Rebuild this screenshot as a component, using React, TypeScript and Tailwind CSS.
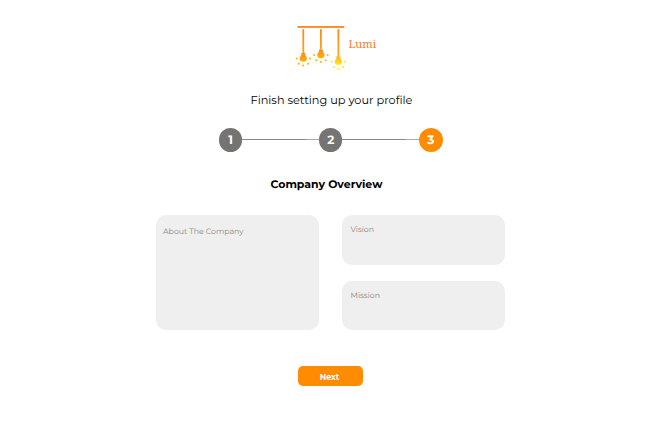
const lamps = [
  { x: 8.3, y: 36.5, from: '#ff8a1c', to: '#ffb000' },
  { x: 25.9, y: 33, from: '#ff8a1c', to: '#ffb400' },
  { x: 43.4, y: 39.8, from: '#ffb01c', to: '#ffea1c' },
];

const sparks = [[-6.7, 0], [6.7, 0], [-4.7, 5.2], [4.7, 5.2], [0, 6.9]];

function Logo() {
  return (
    <div className="ml-[295px] flex h-[50px] w-[84px] items-start">
      <svg width="52" height="50" viewBox="0 0 52 50" className="shrink-0">
        <defs>
          <linearGradient id="rod" gradientUnits="userSpaceOnUse" x1="0" y1="4" x2="0" y2="36">
            <stop offset="0" stopColor="#ff8416" />
            <stop offset="1" stopColor="#ffa81c" />
          </linearGradient>
          {lamps.map((l, i) => (
            <linearGradient key={i} id={`bulb${i}`} x1="0" y1="0" x2="0" y2="1">
              <stop offset="0" stopColor={l.from} />
              <stop offset="1" stopColor={l.to} />
            </linearGradient>
          ))}
        </defs>
        <rect x="2.5" y="4" width="46.7" height="1.9" fill="#ff8a22" />
        {lamps.map((l, i) => (
          <g key={i}>
            <rect x={l.x - 0.9} y="7.2" width="1.8" height={l.y - 12.5} fill="url(#rod)" />
            <path
              transform={`translate(${l.x} ${l.y})`}
              d="M-2-5.6H2V-3.2C2.2-2.4 3.6-1.8 3.6 0A3.6 3.3 0 0 1-3.6 0C-3.6-1.8-2.2-2.4-2-3.2Z"
              fill={`url(#bulb${i})`}
            />
            {sparks.map(([dx, dy], j) => (
              <circle key={j} cx={l.x + dx} cy={l.y + dy} r="1" fill={l.to} />
            ))}
          </g>
        ))}
      </svg>
      <span className="ml-[1.5px] mt-[15px] font-['Noto_Serif','DejaVu_Serif',serif] text-[11px] leading-4 text-[#ff7a1f]">
        Lumi
      </span>
    </div>
  );
}

function Step({ n, active = false }: { n: number; active?: boolean }) {
  return (
    <div
      className={`flex size-[23.4px] shrink-0 items-center justify-center rounded-full pt-0.5 text-[12px] font-bold text-white ${
        active ? 'bg-[#ff8c00]' : 'bg-[#757472]'
      }`}
    >
      {n}
    </div>
  );
}

function Line() {
  return (
    <div className="flex flex-1">
      <div className="h-px flex-1 bg-[#8a8a8a]" />
      <div className="h-px w-[13px] bg-[#a8a8a8]" />
    </div>
  );
}

export default function App() {
  return (
    <main className="h-[431px] w-[669px] overflow-hidden bg-white pt-[22px] font-['Montserrat','Inter',sans-serif] text-black [text-rendering:geometricPrecision]">
      <Logo />
      <h1 className="ml-[250.5px] mt-[19px] h-[18px] whitespace-nowrap text-[11.3px] leading-[18px]">
        Finish setting up your profile
      </h1>
      <div className="ml-[218.8px] mt-[19.2px] flex w-[223.8px] items-center">
        <Step n={1} />
        <Line />
        <Step n={2} />
        <Line />
        <Step n={3} active />
      </div>
      <h2 className="ml-[270.5px] mt-[23.4px] h-[18px] whitespace-nowrap text-[10.95px] font-bold leading-[18px]">
        Company Overview
      </h2>
      <div className="ml-[156px] mt-[22.4px] grid h-[115px] w-[349px] grid-cols-2 gap-x-[23px] text-[7.8px] leading-3 text-[#868686]">
        <div className="rounded-[10px] bg-[#efefef] pl-[7px] pt-[9.4px]">About The Company</div>
        <div className="flex flex-col justify-between">
          <div className="h-[49.5px] rounded-[10px] bg-[#efefef] pl-[8.5px] pt-[7.8px]">Vision</div>
          <div className="h-[49.5px] rounded-[10px] bg-[#efefef] pl-[8.5px] pt-[8px]">Mission</div>
        </div>
      </div>
      <button className="ml-[297.5px] mt-[36px] flex h-5 w-[65px] items-center justify-center rounded-[5px] bg-[#ff8c00] pr-px pt-px text-[8px] font-bold text-white">
        Next
      </button>
    </main>
  );
}
